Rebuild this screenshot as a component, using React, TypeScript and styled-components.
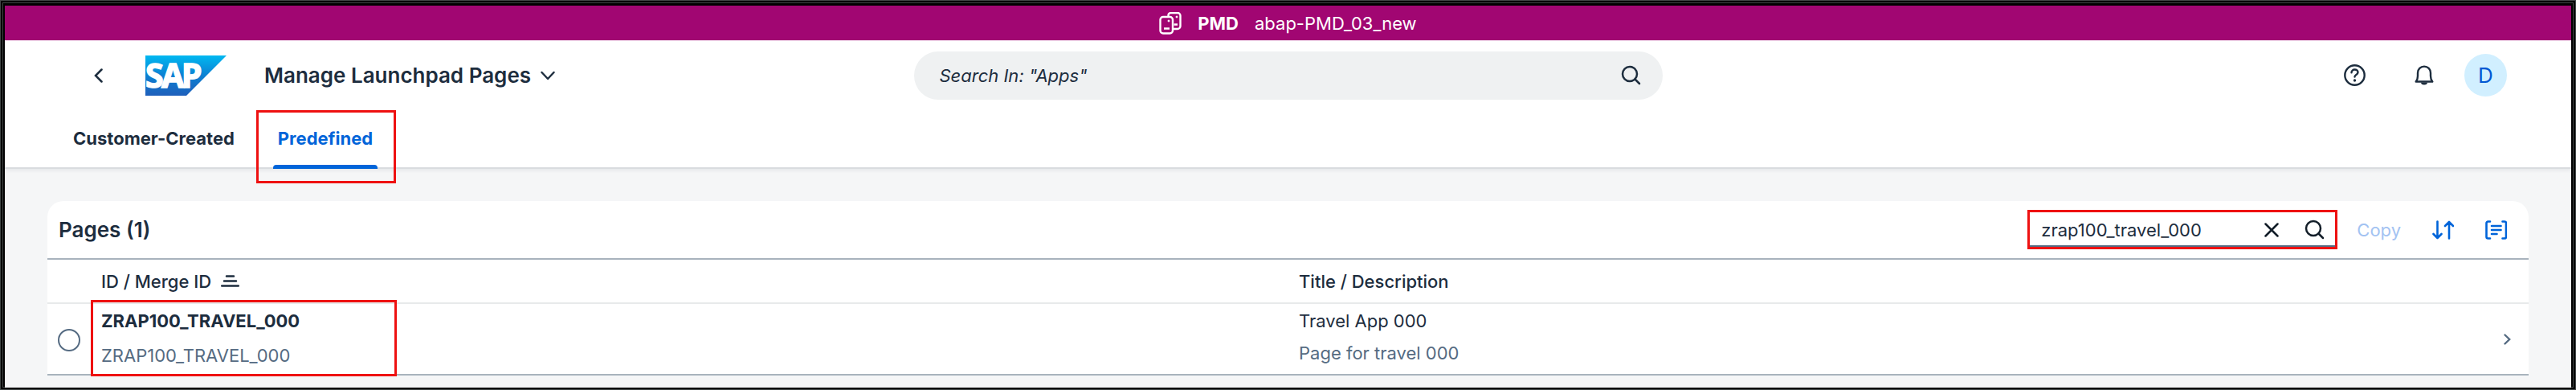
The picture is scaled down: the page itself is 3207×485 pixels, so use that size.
import React, { useState } from "react";
import styled, { createGlobalStyle } from "styled-components";

const ink = "#1d2d3e";
const muted = "#556b82";
const blue = "#0064d9";

const GlobalStyle = createGlobalStyle`
  *, *::before, *::after { box-sizing: border-box; }
  body {
    margin: 0;
    font: 400 22px/28px Inter, "Liberation Sans", sans-serif;
    color: ${ink};
    background: #f5f6f7;
  }
  button, input { font: inherit; color: inherit; }
`;

const Frame = styled.div`
  display: flex;
  flex-direction: column;
  min-height: 100vh;
  padding: 7px 6px 3px;
  background: #000;
  box-shadow: inset 0 0 0 1px #404545, inset 0 0 0 3px #000, inset 0 0 0 4px #404545;
`;

const SystemBar = styled.div`
  display: flex;
  align-items: center;
  justify-content: center;
  height: 43px;
  gap: 20px;
  color: #fff;
  background: #a10672;
`;

const Header = styled.header`
  position: relative;
  background: #fff;
  border-top: 1px solid #f2dcec;
  border-bottom: 2px solid #d9dcdf;
  box-shadow: 0 2px 4px rgba(34, 53, 72, 0.08);
`;

const ShellBar = styled.div`
  display: grid;
  grid-template-columns: 1fr minmax(0, 932px) 1fr;
  align-items: center;
  height: 85px;
  padding: 0 80px;
`;

const ShellStart = styled.div`
  display: flex;
  align-items: center;
  margin: 0 31px;
`;

const ShellEnd = styled.div`
  display: flex;
  align-items: center;
  justify-content: flex-end;
  margin-left: 31px;
`;

const IconButton = styled.button<{ $color?: string }>`
  display: flex;
  align-items: center;
  flex: none;
  padding: 0;
  border: 0;
  background: none;
  color: ${(p) => p.$color ?? ink};
  cursor: pointer;
`;

const LogoLink = styled.a`
  display: flex;
  margin: 0 47px 0 53px;
`;

const Logo = styled.svg`
  overflow: visible;
`;

const AppTitle = styled(IconButton)`
  gap: 12px;
  font-size: 26px;
  font-weight: 600;
  line-height: 32px;
  white-space: nowrap;
`;

const ShellSearch = styled.form`
  display: flex;
  align-items: center;
  height: 60px;
  padding: 0 27px 0 32px;
  border-radius: 30px;
  background: #eff1f2;
`;

const SearchInput = styled.input`
  flex: 1;
  min-width: 0;
  padding: 0;
  border: 0;
  outline: 0;
  background: none;

  &::placeholder {
    color: ${ink};
    font-style: italic;
    opacity: 1;
  }
`;

const HelpButton = styled(IconButton)`
  margin-right: 61px;
`;

const Avatar = styled.button`
  flex: none;
  width: 53px;
  height: 53px;
  margin-left: 38px;
  padding: 0;
  border: 0;
  border-radius: 50%;
  background: #d1efff;
  color: #0057d2;
  font-size: 26px;
`;

const Tabs = styled.nav`
  display: flex;
  gap: 42px;
  height: 72px;
  padding-left: 79px;
`;

const Tab = styled.button<{ $active?: boolean }>`
  position: relative;
  padding: 0 6px;
  border: 0;
  background: none;
  font-weight: 700;
  white-space: nowrap;
  color: ${(p) => (p.$active ? blue : ink)};

  &::after {
    content: "";
    display: ${(p) => (p.$active ? "block" : "none")};
    position: absolute;
    left: 0;
    right: 0;
    bottom: -2px;
    height: 5px;
    border-radius: 4px 4px 0 0;
    background: ${blue};
  }
`;

const Highlight = styled.span<{ $inset: string; $width?: string }>`
  position: absolute;
  inset: ${(p) => p.$inset};
  width: ${(p) => p.$width ?? "auto"};
  border: 3px solid #ee1111;
  pointer-events: none;
  z-index: 1;
`;

const Content = styled.main`
  flex: 1;
  padding: 40px 53px 14px;
  background: #f5f6f7;
`;

const Card = styled.section`
  border-radius: 20px 20px 0 0;
  background: #fff;
`;

const Toolbar = styled.div`
  display: flex;
  align-items: center;
  height: 73px;
  padding: 0 27px 0 14px;
  border-bottom: 2px solid #a8b3bd;
`;

const CardTitle = styled.h2`
  flex: 1;
  margin: 0;
  font-size: 26px;
  font-weight: 600;
  line-height: 32px;
`;

const FilterForm = styled.form`
  display: flex;
  align-items: center;
  gap: 32px;
  width: 386px;
  height: 49px;
  padding: 0 13px 0 14px;
  border: 3px solid #ee1111;
  box-shadow: inset 0 -2px 0 ${muted};
`;

const CopyButton = styled.button`
  margin: 0 39px 0 24px;
  padding: 0;
  border: 0;
  background: none;

  &:disabled { color: #a3c3f2; }
`;

const SortButton = styled(IconButton)`
  margin-right: 39px;
`;

const Table = styled.table`
  width: 100%;
  table-layout: fixed;
  border-collapse: separate;
  border-spacing: 0;
`;

const Col = styled.col<{ $width?: string }>`
  width: ${(p) => p.$width ?? "auto"};
`;

const HeadCell = styled.th`
  height: 55px;
  padding: 0;
  border-bottom: 2px solid #e8eaeb;
  font-weight: 500;
  text-align: left;
`;

const HeadLabel = styled.span`
  display: flex;
  align-items: center;
  gap: 12px;
`;

const Cell = styled.td`
  position: relative;
  height: 89px;
  padding: 0;
  border-bottom: 2px solid #a8b3bd;
`;

const Lines = styled.div<{ $gap: number }>`
  display: flex;
  flex-direction: column;
  gap: ${(p) => p.$gap}px;
  height: 87px;
  padding-top: 7px;
`;

const Strong = styled.span`
  font-weight: 700;
`;

const Secondary = styled.span`
  color: ${muted};
`;

const Radio = styled.input`
  display: block;
  appearance: none;
  width: 28px;
  height: 28px;
  margin: 2px 0 0 13px;
  border: 2px solid ${muted};
  border-radius: 50%;
`;

const RowButton = styled(IconButton)`
  margin-left: 9px;
`;

const SystemIcon = () => (
  <svg width="28" height="28" viewBox="0 0 28 28" fill="none" stroke="#fff" strokeWidth="2.400">
    <path d="M11.500 5V4a3 3 0 0 1 3-3H23a3.500 3.500 0 0 1 3.500 3.500v13A3.500 3.500 0 0 1 23 21h-5" />
    <rect x="1.500" y="6" width="15.500" height="20.500" rx="3.500" />
    <path d="M6 20.500h7M18.500 15.500h4.500" />
    <circle cx="12" cy="11" r="1" fill="#fff" strokeWidth="1" />
    <circle cx="22" cy="6" r="1" fill="#fff" strokeWidth="1" />
  </svg>
);

const BackIcon = () => (
  <svg width="11" height="18" viewBox="0 0 11 18" fill="none" stroke="currentColor" strokeWidth="2.500" strokeLinecap="round">
    <path d="M9.500 1.500 2 9l7.500 7.500" />
  </svg>
);

const DownIcon = () => (
  <svg width="18" height="12" viewBox="0 0 18 12" fill="none" stroke="currentColor" strokeWidth="2.400" strokeLinecap="round" strokeLinejoin="round">
    <path d="m1.500 2 7.500 8 7.500-8" />
  </svg>
);

const SapLogo = () => (
  <Logo width="101" height="50" viewBox="0 0 101 50" role="img" aria-label="SAP">
    <defs>
      <linearGradient id="sap" x1="0" y1="0" x2="0" y2="1">
        <stop offset="0" stopColor="#00b8f1" />
        <stop offset="0.500" stopColor="#0d80d2" />
        <stop offset="1" stopColor="#1e5fbb" />
      </linearGradient>
    </defs>
    <path d="M0 0h101L51 50H0z" fill="url(#sap)" />
    <text x="0 20 45" y="40" fill="#fff" stroke="#fff" strokeWidth="1.500" fontFamily="'Noto Sans', sans-serif" fontWeight="700" fontSize="41">
      SAP
    </text>
  </Logo>
);

const SearchIcon = () => (
  <svg width="25" height="25" viewBox="0 0 25 25" fill="none" stroke="currentColor" strokeWidth="2.500" strokeLinecap="round">
    <circle cx="11" cy="11" r="9" />
    <path d="m17.500 17.500 5.500 5.500" />
  </svg>
);

const HelpIcon = () => (
  <svg width="27" height="27" viewBox="0 0 27 27" fill="none" stroke="currentColor" strokeWidth="2.400" strokeLinecap="round">
    <circle cx="13.500" cy="13.500" r="12.200" />
    <path d="M9.500 10.300c0-2.300 1.800-3.800 4-3.800s4 1.500 4 3.600c0 3-4 2.900-4 5.400" />
    <circle cx="13.500" cy="20" r="1.700" fill="currentColor" stroke="none" />
  </svg>
);

const BellIcon = () => (
  <svg width="24" height="25" viewBox="0 0 24 25" fill="none" stroke="currentColor" strokeWidth="2.400" strokeLinejoin="round">
    <path d="M1.700 20.500c1.800-2 2.300-4 2.300-7V9.700C4 5 7.500 1.600 12 1.600S20 5 20 9.700v3.800c0 3 .5 5 2.300 7z" />
    <path d="M8 21.500a4 3 0 0 0 8 0z" fill="currentColor" stroke="none" />
  </svg>
);

const ClearIcon = () => (
  <svg width="18" height="18" viewBox="0 0 18 18" fill="none" stroke="currentColor" strokeWidth="2.500" strokeLinecap="round">
    <path d="m1.500 1.500 15 15m0-15-15 15" />
  </svg>
);

const SortIcon = () => (
  <svg width="27" height="24" viewBox="0 0 27 24" fill="none" stroke="currentColor" strokeWidth="2.600" strokeLinecap="round" strokeLinejoin="round">
    <path d="M6.500 1.500v20.500m-5-5 5 5 5-5M21 22.500V2m-5 5 5-5 5 5" />
  </svg>
);

const GroupIcon = () => (
  <svg width="27" height="24" viewBox="0 0 27 24" fill="none" stroke="currentColor" strokeWidth="2.600" strokeLinecap="round" strokeLinejoin="round">
    <path d="M6 1.500H3.500a2 2 0 0 0-2 2v17a2 2 0 0 0 2 2H6M21.500 1.500H24a2 2 0 0 1 2 2v17a2 2 0 0 1-2 2h-2.500M8 7h11.500M8 12h11.500M8 17h6.500" />
  </svg>
);

const AscendingIcon = () => (
  <svg width="23" height="15" viewBox="0 0 23 15" fill="none" stroke="currentColor" strokeWidth="2.500" strokeLinecap="round">
    <path d="M7 1.500h9M4 7.500h15M1.200 13.500h20.600" />
  </svg>
);

const NextIcon = () => (
  <svg width="9" height="14" viewBox="0 0 9 14" fill="none" stroke="currentColor" strokeWidth="2.400" strokeLinecap="round">
    <path d="m1.500 1.500 5.700 5.500-5.700 5.500" />
  </svg>
);

export default function App() {
  const [query, setQuery] = useState("zrap100_travel_000");

  return (
    <>
      <GlobalStyle />
      <Frame>
        <SystemBar>
          <SystemIcon />
          <Strong>PMD</Strong>
          <span>abap-PMD_03_new</span>
        </SystemBar>

        <Header>
          <ShellBar>
            <ShellStart>
              <IconButton aria-label="Back"><BackIcon /></IconButton>
              <LogoLink href="#"><SapLogo /></LogoLink>
              <AppTitle>Manage Launchpad Pages<DownIcon /></AppTitle>
            </ShellStart>
            <ShellSearch role="search" onSubmit={(e) => e.preventDefault()}>
              <SearchInput aria-label="Search in apps" placeholder={'Search In: "Apps"'} />
              <IconButton aria-label="Search"><SearchIcon /></IconButton>
            </ShellSearch>
            <ShellEnd>
              <HelpButton aria-label="Help"><HelpIcon /></HelpButton>
              <IconButton aria-label="Notifications"><BellIcon /></IconButton>
              <Avatar aria-label="Profile">D</Avatar>
            </ShellEnd>
          </ShellBar>
          <Tabs>
            <Tab>Customer-Created</Tab>
            <Tab $active>
              Predefined
              <Highlight $inset="1px -23px -20px -21px" />
            </Tab>
          </Tabs>
        </Header>

        <Content>
          <Card>
            <Toolbar>
              <CardTitle>Pages (1)</CardTitle>
              <FilterForm role="search" onSubmit={(e) => e.preventDefault()}>
                <SearchInput aria-label="Filter pages" value={query} onChange={(e) => setQuery(e.target.value)} />
                <IconButton type="button" aria-label="Clear" $color="#131e29" onClick={() => setQuery("")}><ClearIcon /></IconButton>
                <IconButton aria-label="Search" $color="#131e29"><SearchIcon /></IconButton>
              </FilterForm>
              <CopyButton disabled>Copy</CopyButton>
              <SortButton aria-label="Sort" $color={blue}><SortIcon /></SortButton>
              <IconButton aria-label="Group" $color={blue}><GroupIcon /></IconButton>
            </Toolbar>
            <Table>
              <colgroup>
                <Col $width="67px" />
                <Col />
                <Col />
                <Col $width="40px" />
              </colgroup>
              <thead>
                <tr>
                  <HeadCell />
                  <HeadCell scope="col"><HeadLabel>ID / Merge ID<AscendingIcon /></HeadLabel></HeadCell>
                  <HeadCell scope="col">Title / Description</HeadCell>
                  <HeadCell />
                </tr>
              </thead>
              <tbody>
                <tr>
                  <Cell><Radio type="radio" name="page" aria-label="Select ZRAP100_TRAVEL_000" /></Cell>
                  <Cell>
                    <Lines $gap={15}>
                      <Strong>ZRAP100_TRAVEL_000</Strong>
                      <Secondary>ZRAP100_TRAVEL_000</Secondary>
                    </Lines>
                    <Highlight $inset="-5px auto -3px -13px" $width="381px" />
                  </Cell>
                  <Cell>
                    <Lines $gap={12}>
                      <span>Travel App 000</span>
                      <Secondary>Page for travel 000</Secondary>
                    </Lines>
                  </Cell>
                  <Cell><RowButton aria-label="Open page" $color={muted}><NextIcon /></RowButton></Cell>
                </tr>
              </tbody>
            </Table>
          </Card>
        </Content>
      </Frame>
    </>
  );
}
